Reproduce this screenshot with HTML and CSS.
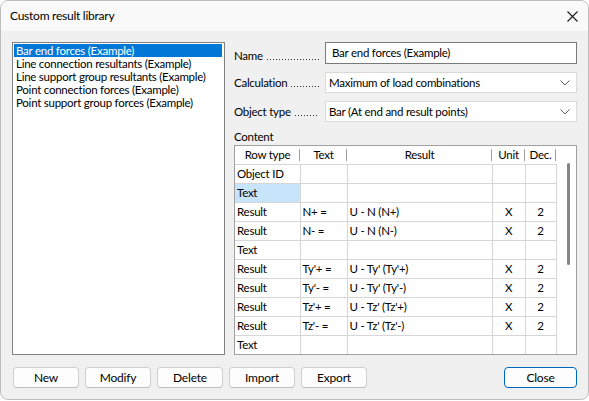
FILE: index.html
```html
<!DOCTYPE html>
<html>
<head>
<meta charset="utf-8">
<link rel="stylesheet" href="styles.css">
</head>
<body>
<div class="window">
  <div class="titlebar">
    <span class="title">Custom result library</span>
    <svg class="xicon" width="11" height="11" viewBox="0 0 11 11"><path d="M0.5 0.5 L10.5 10.5 M10.5 0.5 L0.5 10.5" stroke="#1a1a1a" stroke-width="1.1" fill="none"/></svg>
  </div>
  <div class="content">
    <div class="main">
      <div class="list">
        <div class="item selected">Bar end forces (Example)</div>
        <div class="item">Line connection resultants (Example)</div>
        <div class="item">Line support group resultants (Example)</div>
        <div class="item">Point connection forces (Example)</div>
        <div class="item">Point support group forces (Example)</div>
      </div>
      <div class="right">
        <div class="field">
          <span class="label name-label">Name<span class="leader"></span></span>
          <div class="input">Bar end forces (Example)</div>
        </div>
        <div class="field">
          <span class="label">Calculation<span class="leader"></span></span>
          <div class="combo"><span>Maximum of load combinations</span><svg width="10" height="6" viewBox="0 0 10 6"><path d="M0.5 0.5 L5 5 L9.5 0.5" stroke="#606060" fill="none" stroke-width="1"/></svg></div>
        </div>
        <div class="field">
          <span class="label">Object type<span class="leader"></span></span>
          <div class="combo"><span>Bar (At end and result points)</span><svg width="10" height="6" viewBox="0 0 10 6"><path d="M0.5 0.5 L5 5 L9.5 0.5" stroke="#606060" fill="none" stroke-width="1"/></svg></div>
        </div>
        <div class="content-label">Content</div>
        <div class="grid-box">
          <table class="grid">
            <colgroup>
              <col class="c1"><col class="c2"><col class="c3"><col class="c4"><col class="c5">
            </colgroup>
            <thead>
              <tr><th>Row type</th><th>Text</th><th>Result</th><th>Unit</th><th class="dec">Dec.</th></tr>
            </thead>
            <tbody>
              <tr><td>Object ID</td><td></td><td></td><td></td><td></td></tr>
              <tr><td class="hl">Text</td><td></td><td></td><td></td><td></td></tr>
              <tr><td>Result</td><td>N+ =</td><td>U - N (N+)</td><td class="ctr">X</td><td class="ctr">2</td></tr>
              <tr><td>Result</td><td>N- =</td><td>U - N (N-)</td><td class="ctr">X</td><td class="ctr">2</td></tr>
              <tr><td>Text</td><td></td><td></td><td></td><td></td></tr>
              <tr><td>Result</td><td>Ty'+ =</td><td>U - Ty' (Ty'+)</td><td class="ctr">X</td><td class="ctr">2</td></tr>
              <tr><td>Result</td><td>Ty'- =</td><td>U - Ty' (Ty'-)</td><td class="ctr">X</td><td class="ctr">2</td></tr>
              <tr><td>Result</td><td>Tz'+ =</td><td>U - Tz' (Tz'+)</td><td class="ctr">X</td><td class="ctr">2</td></tr>
              <tr><td>Result</td><td>Tz'- =</td><td>U - Tz' (Tz'-)</td><td class="ctr">X</td><td class="ctr">2</td></tr>
              <tr><td>Text</td><td></td><td></td><td></td><td></td></tr>
            </tbody>
          </table>
          <div class="scroll"><div class="thumb"></div></div>
        </div>
      </div>
    </div>
    <div class="buttons">
      <button class="btn">New</button>
      <button class="btn">Modify</button>
      <button class="btn">Delete</button>
      <button class="btn">Import</button>
      <button class="btn">Export</button>
      <span class="spacer"></span>
      <button class="btn close">Close</button>
    </div>
  </div>
</div>
</body>
</html>
```
FILE: styles.css
```css
* { box-sizing: border-box; }
html, body { margin: 0; padding: 0; background: #ffffff; }
body {
  font-family: Lato, "Noto Sans", sans-serif;
  font-size: 11.5px;
  letter-spacing: -0.25px;
  color: #000;
}
.window {
  width: 589px;
  height: 400px;
  border: 1px solid #bdbdbd;
  border-radius: 8px;
  background: #f0f0f0;
  overflow: hidden;
  display: flex;
  flex-direction: column;
}
.titlebar {
  height: 30px;
  background: #f9f9f9;
  display: flex;
  align-items: center;
  padding: 0 10px 0 9px;
  flex: none;
}
.title { flex: 1; padding-bottom: 1px; font-size: 12px; }
.content {
  padding: 11px 11px 0 11px;
  display: flex;
  flex-direction: column;
}
.main {
  display: flex;
  gap: 9px;
  height: 314px;
}
.list {
  width: 213px;
  height: 313px;
  background: #fff;
  border: 1px solid #828282;
  padding: 1px 2px 0 1px;
}
.item {
  height: 13px;
  line-height: 13px;
  padding-left: 2px;
  white-space: nowrap;
}
.item.selected { background: #0078d7; color: #fff; }
.right {
  width: 343px;
  display: flex;
  flex-direction: column;
}
.field {
  display: flex;
  align-items: center;
  margin-bottom: 8px;
}
.label {
  width: 91px;
  display: flex;
  align-items: baseline;
  padding-right: 6px;
  white-space: nowrap;
}
.name-label { padding-top: 4px; }
.leader {
  flex: 1;
  height: 1px;
  margin-left: 4px;
  background-image: linear-gradient(to right, #333 1px, transparent 1px);
  background-size: 3px 1px;
  background-repeat: repeat-x;
}
.input {
  width: 252px;
  height: 22px;
  border: 1px solid #7a7a7a;
  background: #fff;
  padding: 0 6px;
  line-height: 19px;
}
.combo {
  width: 252px;
  height: 21px;
  border: 1px solid #d9d9d9;
  background: #fff;
  padding: 0 6px 0 3px;
  display: flex;
  align-items: center;
  justify-content: space-between;
}
.content-label {
  margin-top: 1px;
  height: 14px;
  line-height: 12px;
}
.grid-box {
  width: 343px;
  height: 210px;
  border: 1px solid #a0a0a0;
  background: #fff;
  display: flex;
  position: relative;
}
.grid {
  border-collapse: collapse;
  table-layout: fixed;
  width: 321px;
  height: 208px;
}
.c1 { width: 65px; }
.c2 { width: 47px; }
.c3 { width: 145px; }
.c4 { width: 33px; }
.c5 { width: 31px; }
.grid th {
  height: 18px;
  font-weight: normal;
  text-align: center;
  padding: 0;
  border-bottom: 1px solid #d6d6d6;
  position: relative;
}
.grid th::after {
  content: "";
  position: absolute;
  right: 0;
  top: 3px;
  bottom: 3px;
  width: 1px;
  background: #a0a0a0;
}
.grid td {
  height: 19px;
  padding: 0 2px;
  border-right: 1px solid #d6d6d6;
  border-bottom: 1px solid #d6d6d6;
  white-space: nowrap;
  overflow: hidden;
}
.grid tbody tr:last-child td { border-bottom: none; }
.grid td.ctr { text-align: center; }
.grid td.hl { background: #c7e5fa; }
.scroll {
  flex: 1;
  position: relative;
}
.thumb {
  position: absolute;
  left: 10px;
  top: 17px;
  width: 3px;
  height: 102px;
  background: #858585;
  border-radius: 2px;
}
.buttons {
  display: flex;
  margin-top: 11px;
  gap: 6px;
  padding-left: 1px;
}
.btn {
  font-family: inherit;
  font-size: 12px;
  letter-spacing: -0.2px;
  width: 66px;
  height: 21px;
  background: #fdfdfd;
  border: 1px solid #d0d0d0;
  border-bottom-color: #c0c0c0;
  border-radius: 4px;
  padding: 0;
  color: #000;
}
.spacer { flex: 1; }
.btn.close {
  width: 73px;
  border: 1px solid #0067c0;
}
```
